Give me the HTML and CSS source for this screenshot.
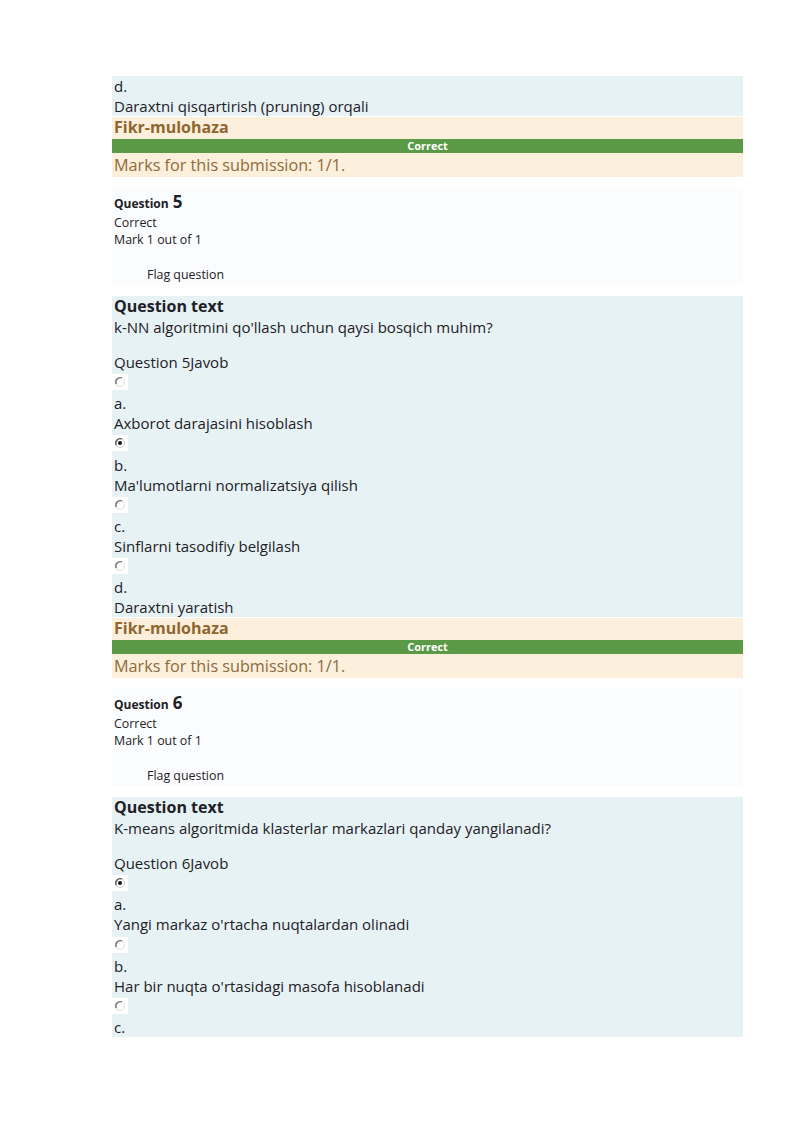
FILE: index.html
```html
<!DOCTYPE html>
<html>
<head>
<meta charset="utf-8">
<link rel="stylesheet" href="styles.css">
</head>
<body>
<div class="page">
  <div class="formulation first">
    <div class="ans-label">d.</div>
    <div class="ans-text">Daraxtni qisqartirish (pruning) orqali</div>
  </div>
  <div class="feedback">
    <div class="fb-title">Fikr-mulohaza</div>
    <div class="badge">Correct</div>
    <div class="marks">Marks for this submission: 1/1.</div>
  </div>

  <div class="info">
    <div class="qno"><span class="qword">Question</span> <span class="qnum">5</span></div>
    <div class="small">Correct</div>
    <div class="small">Mark 1 out of 1</div>
    <div class="flag">Flag question</div>
  </div>
  <div class="formulation">
    <div class="qt-title">Question text</div>
    <div class="qt">k-NN algoritmini qo'llash uchun qaysi bosqich muhim?</div>
    <div class="prompt">Question 5Javob</div>
    <div class="radio"><svg width="12" height="12" viewBox="0 0 12 12"><circle cx="6" cy="6" r="4.5" fill="#fff" stroke="#e2e2e2" stroke-width="1.2"/><path d="M2.2 8 A4.5 4.5 0 0 1 8 2" fill="none" stroke="#6b6b6b" stroke-width="1.3"/></svg></div>
    <div class="ans-label">a.</div>
    <div class="ans-text">Axborot darajasini hisoblash</div>
    <div class="radio"><svg width="12" height="12" viewBox="0 0 12 12"><circle cx="6" cy="6" r="4.5" fill="#fff" stroke="#d0d0d0" stroke-width="1.2"/><path d="M2.2 8 A4.5 4.5 0 0 1 8 2" fill="none" stroke="#555" stroke-width="1.3"/><circle cx="6" cy="6" r="2" fill="#111"/></svg></div>
    <div class="ans-label">b.</div>
    <div class="ans-text">Ma'lumotlarni normalizatsiya qilish</div>
    <div class="radio"><svg width="12" height="12" viewBox="0 0 12 12"><circle cx="6" cy="6" r="4.5" fill="#fff" stroke="#e2e2e2" stroke-width="1.2"/><path d="M2.2 8 A4.5 4.5 0 0 1 8 2" fill="none" stroke="#6b6b6b" stroke-width="1.3"/></svg></div>
    <div class="ans-label">c.</div>
    <div class="ans-text">Sinflarni tasodifiy belgilash</div>
    <div class="radio"><svg width="12" height="12" viewBox="0 0 12 12"><circle cx="6" cy="6" r="4.5" fill="#fff" stroke="#e2e2e2" stroke-width="1.2"/><path d="M2.2 8 A4.5 4.5 0 0 1 8 2" fill="none" stroke="#6b6b6b" stroke-width="1.3"/></svg></div>
    <div class="ans-label">d.</div>
    <div class="ans-text">Daraxtni yaratish</div>
  </div>
  <div class="feedback">
    <div class="fb-title">Fikr-mulohaza</div>
    <div class="badge">Correct</div>
    <div class="marks">Marks for this submission: 1/1.</div>
  </div>

  <div class="info">
    <div class="qno"><span class="qword">Question</span> <span class="qnum">6</span></div>
    <div class="small">Correct</div>
    <div class="small">Mark 1 out of 1</div>
    <div class="flag">Flag question</div>
  </div>
  <div class="formulation last">
    <div class="qt-title">Question text</div>
    <div class="qt">K-means algoritmida klasterlar markazlari qanday yangilanadi?</div>
    <div class="prompt">Question 6Javob</div>
    <div class="radio"><svg width="12" height="12" viewBox="0 0 12 12"><circle cx="6" cy="6" r="4.5" fill="#fff" stroke="#d0d0d0" stroke-width="1.2"/><path d="M2.2 8 A4.5 4.5 0 0 1 8 2" fill="none" stroke="#555" stroke-width="1.3"/><circle cx="6" cy="6" r="2" fill="#111"/></svg></div>
    <div class="ans-label">a.</div>
    <div class="ans-text">Yangi markaz o'rtacha nuqtalardan olinadi</div>
    <div class="radio"><svg width="12" height="12" viewBox="0 0 12 12"><circle cx="6" cy="6" r="4.5" fill="#fff" stroke="#e2e2e2" stroke-width="1.2"/><path d="M2.2 8 A4.5 4.5 0 0 1 8 2" fill="none" stroke="#6b6b6b" stroke-width="1.3"/></svg></div>
    <div class="ans-label">b.</div>
    <div class="ans-text">Har bir nuqta o'rtasidagi masofa hisoblanadi</div>
    <div class="radio"><svg width="12" height="12" viewBox="0 0 12 12"><circle cx="6" cy="6" r="4.5" fill="#fff" stroke="#e2e2e2" stroke-width="1.2"/><path d="M2.2 8 A4.5 4.5 0 0 1 8 2" fill="none" stroke="#6b6b6b" stroke-width="1.3"/></svg></div>
    <div class="ans-label">c.</div>
  </div>
</div>
</body>
</html>
```

FILE: styles.css
```css
html, body {
  margin: 0;
  padding: 0;
  background: #fff;
}
body {
  font-family: "Open Sans", "Noto Sans", sans-serif;
  color: #1d2125;
}
.page {
  width: 631px;
  margin-left: 112px;
  padding-top: 76px;
  display: flex;
  flex-direction: column;
}
.formulation {
  background: #e7f2f5;
  padding: 0 2px;
  display: flex;
  flex-direction: column;
}
.formulation.last {
  padding-bottom: 0;
}
.ans-label, .ans-text, .qt, .prompt {
  font-size: 15px;
  line-height: 20px;
}
.qt-title {
  font-size: 16px;
  font-weight: 700;
  line-height: 21px;
}
.prompt {
  margin-top: 15px;
}
.radio {
  width: 16px;
  height: 22.3px;
  margin-top: -1px;
  margin-left: -2px;
  display: flex;
  align-items: center;
  justify-content: center;
  background: linear-gradient(#fff, #fff) center / 16px 16px no-repeat;
}
.feedback {
  background: #fcefdc;
  margin-top: 1px;
  padding: 0 2px;
  display: flex;
  flex-direction: column;
}
.fb-title {
  color: #8e662e;
  font-weight: 700;
  font-size: 16px;
  line-height: 20px;
}
.badge {
  background: #5a9a46;
  color: #fff;
  font-size: 11px;
  font-weight: 700;
  text-align: center;
  line-height: 14px;
  margin: 2px -2px 0;
}
.marks {
  color: #8d6b3b;
  font-size: 16.2px;
  line-height: 24px;
}
.info {
  margin-top: 10px;
  margin-bottom: 11px;
  background: #fbfcfd;
  padding: 4px 2px 2px;
  display: flex;
  flex-direction: column;
}
.qno {
  line-height: 21px;
}
.qword {
  font-size: 12px;
  font-weight: 700;
}
.qnum {
  font-size: 17px;
  font-weight: 700;
}
.small {
  font-size: 12.4px;
  line-height: 17px;
}
.flag {
  font-size: 12.4px;
  line-height: 17px;
  margin-top: 18px;
  padding-left: 33px;
}
```
